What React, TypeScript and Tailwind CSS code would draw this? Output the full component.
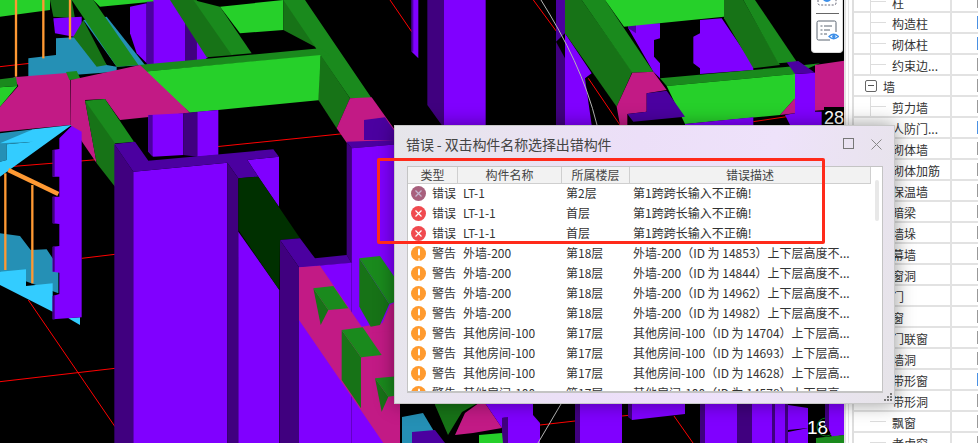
const PURPLE = "#8000ff";
const DARK = "#40007f";
const MID = "#4b00a0";
const BRIGHT = "#26d02a";
const GREEN = "#1a8a1d";
const DEEP = "#177317";
const MAGENTA = "#c21a85";
const CYAN = "#33ccff";
const TEAL = "#2590b5";
const ORANGE = "#ff9933";

// scene polygons, in 3x screenshot pixels, painted back to front
const backShapes: [string, string][] = [
  [BRIGHT, "0,0 150,0 150,30 0,50"],
  [DEEP, "150,0 215,0 225,55 160,50"],
  [PURPLE, "160,55 245,50 245,115 165,100"],
  [TEAL, "85,175 168,165 168,115 250,110 320,195 350,200 350,215 85,235"],
  [DEEP, "250,60 320,195 290,200 220,110"],
  [TEAL, "250,60 320,50 435,195 350,200"],
  [GREEN, "215,0 280,0 415,195 350,200"],
  [BRIGHT, "280,0 510,0 300,20"],
  [PURPLE, "390,20 440,10 440,190 410,160 390,100"],
  [MID, "440,5 460,5 460,200 440,200"],
  [PURPLE, "460,0 555,0 555,200 460,200"],
  [DARK, "555,60 590,110 590,200 555,200"],
  [PURPLE, "590,120 625,170 590,200"],
  [DEEP, "510,0 590,0 700,165 620,172"],
  [GREEN, "580,0 660,20 755,160 695,165"],
  [BRIGHT, "660,20 850,0 850,90 720,100"],
  [DEEP, "850,0 915,0 945,140 850,90"],
  [GREEN, "850,0 915,0 1115,295 1050,295 960,165 945,140"],
  [GREEN, "415,195 960,145 990,165 430,215"],
  [BRIGHT, "430,215 962,165 962,300 570,338"],
  [MAGENTA, "0,320 55,258 40,232 210,218 212,375 0,395"],
  [BRIGHT, "0,262 52,258 0,320"],
  [GREEN, "0,238 48,232 52,258 0,262"],
  [GREEN, "198,216 230,213 242,238 208,240"],
  [MAGENTA, "212,240 420,195 570,338 360,360 315,297 255,300 290,490 212,375"],
  [DEEP, "255,302 290,490 345,560 345,430 400,425 345,350"],
  [GREEN, "255,302 315,297 402,425 345,430"],
  [PURPLE, "445,345 550,340 550,465 460,470 445,455"],
  [MID, "445,345 458,345 458,470 445,455"],
  [DARK, "550,340 592,335 592,470 550,465"],
  [PURPLE, "592,335 655,330 655,465 592,470"],
  [DEEP, "962,165 1050,295 1010,385 955,300"],
  [MAGENTA, "1050,295 1115,292 1185,390 1185,424 1040,428 1010,385"],
  [MID, "1092,360 1155,352 1185,395 1185,420 1092,420"],
  [TEAL, "0,400 100,388 100,425 20,433 20,480 0,485"],
  [CYAN, "0,430 100,425 20,433 20,480 0,485 0,530 215,375 100,388"],
  [TEAL, "0,700 60,708 92,750 140,748 175,800 175,880 0,815"],
  [CYAN, "0,815 78,808 78,858 158,850 158,935 0,855"],
  [CYAN, "205,955 240,952 240,975"],
  [PURPLE, "215,378 178,415 178,447 158,450 158,530 178,530 178,590 158,590 158,670 178,672 178,738 158,740 158,815 178,818 178,882 158,888 158,958 245,952 245,395"],
  [DARK, "158,450 164,450 164,530 158,530"],
  [DARK, "158,590 164,590 164,670 158,670"],
  [DARK, "158,740 164,740 164,815 158,815"],
  [DARK, "158,888 164,888 164,958 158,958"],
];

const frontShapes: [string, string][] = [
  [DARK, "343,432 400,515 400,1329 343,1329"],
  [PURPLE, "400,515 682,488 682,1329 400,1329"],
  [PURPLE, "742,480 837,470 837,620 775,530"],
  [MID, "343,432 405,425 445,482 820,448 837,470 742,480 775,530 715,535 682,488 400,515"],
  [DARK, "682,488 715,535 715,1329 682,1329"],
  [PURPLE, "715,695 838,870 838,1329 715,1329"],
  ["#003000", "715,535 775,530 900,715 840,720 838,870 715,690"],
  [DARK, "1040,425 1055,445 1055,790 1040,765"],
  [MID, "1040,425 1185,420 1200,432 1055,445"],
  [PURPLE, "1055,445 1200,432 1200,1329 1055,1329"],
  [MID, "840,720 900,715 945,775 1040,765 1055,790 897,802"],
  [DARK, "840,720 897,802 897,1329 840,1329"],
  [PURPLE, "897,802 1055,788 1055,1329 897,1329"],
  [MAGENTA, "897,802 960,797 1085,980 1200,960 1200,1329 1150,1329 897,960"],
  [MAGENTA, "1110,980 1145,975 1170,915 1200,900 1200,990 1110,1000"],
  [DEEP, "940,865 985,930 962,975"],
  [GREEN, "940,865 1000,858 1045,925 985,930"],
  [DEEP, "1078,775 1168,912 1140,975 1112,980 1078,920"],
  [GREEN, "1078,775 1140,768 1200,855 1200,900 1168,912"],
  [DEEP, "1025,990 1083,1072 1083,1225 1025,1140"],
  [GREEN, "1025,990 1088,982 1145,1065 1083,1072"],
  [DEEP, "1125,1135 1165,1190 1145,1235"],
  [GREEN, "1125,1135 1200,1128 1200,1185 1165,1190"],
];

// top middle part, offset by 1200 in the 3x space
const topRight: [string, string][] = [
  [PURPLE, "35,0 55,0 55,175 35,155"],
  [MID, "35,0 40,0 40,155 35,155"],
  [DARK, "82,0 132,0 132,375 125,375 82,315"],
  [PURPLE, "132,0 257,0 257,375 132,375"],
  [MID, "468,0 495,0 495,100 468,125"],
  [DARK, "468,125 495,175 495,375 468,375"],
  [PURPLE, "495,100 575,220 555,235 575,375 495,375"],
  [PURPLE, "685,70 780,70 780,115 762,120 762,170 780,190 780,235 760,215 685,85"],
  [MID, "685,70 708,70 708,100 685,85"],
  [PURPLE, "880,110 900,100 900,60 965,55 1060,195 1060,210 900,222 900,205 880,190"],
  [DEEP, "495,0 545,0 697,215 650,320 495,100"],
  [GREEN, "545,0 615,0 760,215 697,218"],
  [BRIGHT, "615,0 972,0 972,50 672,80"],
  [DEEP, "972,0 1030,0 1140,195 1060,205 972,55"],
  [GREEN, "1030,0 1065,0 1190,185 1135,190"],
  [GREEN, "780,235 1165,200 1260,190 1185,222 800,258"],
  [BRIGHT, "800,258 1185,222 1185,295 1140,345 855,372"],
  [MAGENTA, "697,218 760,215 800,270 740,280 740,335 682,342 682,375 660,375 650,320"],
  [MID, "740,280 800,272 855,350 700,365 682,342 740,335"],
  [MAGENTA, "1140,345 1185,295 1185,340"],
  [MAGENTA, "1245,195 1332,182 1332,325 1245,332"],
  [PURPLE, "1185,222 1245,218 1245,375 1185,375"],
  [MID, "1160,187 1195,183 1245,218 1185,222"],
  [PURPLE, "855,372 1060,352 1060,375 855,375"],
  [PURPLE, "1155,345 1185,340 1185,375 1170,375"],
  [PURPLE, "1245,335 1265,335 1265,375 1245,375"],
];

// strip under the dialog, real screenshot pixels
const bottomLeft: [string, string][] = [
  [MAGENTA, "394,400 400,400 400,443 394,443"],
  [TEAL, "402,417 423,413 435,433 435,443 402,443"],
  [MID, "412,432 435,430 445,443 412,443"],
  [DEEP, "435,400 483,400 462,412 448,435 435,405"],
  [MAGENTA, "483,400 502,428 473,433 455,435 465,413"],
  [PURPLE, "483,400 508,400 508,417 502,418 502,428"],
  [PURPLE, "502,418 508,417 508,400 533,400 533,415 540,423 540,443 502,443"],
  [DARK, "502,418 508,417 508,443 502,443"],
  [BRIGHT, "479,435 502,433 503,443 479,443"],
  [DARK, "575,400 580,400 580,443 575,443"],
  [PURPLE, "580,400 622,400 622,443 580,443"],
  [DARK, "628,400 632,400 632,420 628,417"],
  [PURPLE, "632,400 685,400 685,414 632,420"],
  [DARK, "700,400 705,400 705,443 700,443"],
  [PURPLE, "705,400 737,400 737,443 705,443"],
  [DARK, "737,400 752,400 752,443 737,443"],
  [PURPLE, "752,400 772,400 772,443 752,443"],
  [DARK, "772,400 775,400 775,443 772,443"],
  [PURPLE, "775,400 785,400 785,443 775,443"],
  [DARK, "785,400 788,400 788,443 785,443"],
  [PURPLE, "788,405 808,408 808,428 788,430"],
  [PURPLE, "788,432 808,428 808,443 788,443"],
];

const redLines3x = [
  "0,200 90,190",
  "0,1145 345,1105",
  "85,900 345,1280",
  "245,775 345,763",
  "650,440 1040,400",
  "30,500 340,475",
  "1170,0 1235,95",
  "1600,0 1670,95",
  "1765,235 1860,375",
  "2260,365 2360,350",
];

const errorRow = (first: boolean, name: string, floor: string) => ({
  kind: first ? ("muted" as const) : ("error" as const),
  label: "错误",
  name,
  floor,
  desc: "第1跨跨长输入不正确!",
});

const warnRow = (name: string, floor: string, desc: string) => ({
  kind: "warn" as const,
  label: "警告",
  name,
  floor,
  desc,
});

const rows = [
  errorRow(true, "LT-1", "第2层"),
  errorRow(false, "LT-1-1", "首层"),
  errorRow(false, "LT-1-1", "首层"),
  warnRow("外墙-200", "第18层", "外墙-200（ID 为 14853）上下层高度不..."),
  warnRow("外墙-200", "第18层", "外墙-200（ID 为 14844）上下层高度不..."),
  warnRow("外墙-200", "第18层", "外墙-200（ID 为 14962）上下层高度不..."),
  warnRow("外墙-200", "第18层", "外墙-200（ID 为 14982）上下层高度不..."),
  warnRow("其他房间-100", "第17层", "其他房间-100（ID 为 14704）上下层高..."),
  warnRow("其他房间-100", "第17层", "其他房间-100（ID 为 14693）上下层高..."),
  warnRow("其他房间-100", "第17层", "其他房间-100（ID 为 14628）上下层高..."),
  warnRow("其他房间-100", "第17层", "其他房间-100（ID 为 14578）上下层高..."),
];

const tree: { name: string; group?: boolean; line?: boolean; blue?: boolean }[] = [
  { name: "柱", line: true },
  { name: "构造柱", line: true, blue: true },
  { name: "砌体柱", line: true, blue: true },
  { name: "约束边...", line: true },
  { name: "墙", group: true },
  { name: "剪力墙", line: true },
  { name: "人防门...", blue: true },
  { name: "砌体墙" },
  { name: "砌体加筋" },
  { name: "保温墙" },
  { name: "暗梁" },
  { name: "墙垛" },
  { name: "幕墙" },
  { name: "窗洞" },
  { name: "门" },
  { name: "窗" },
  { name: "门联窗" },
  { name: "墙洞" },
  { name: "带形窗", blue: true },
  { name: "带形洞" },
  { name: "飘窗" },
  { name: "老虎窗" },
];

function Shapes({ items }: { items: [string, string][] }) {
  return (
    <>
      {items.map(([fill, points], i) => (
        <polygon key={i} fill={fill} points={points} />
      ))}
    </>
  );
}

function Scene() {
  return (
    <svg viewBox="0 0 2532 1329" className="h-full w-full" aria-hidden>
      <rect width="2532" height="1329" fill="#000" />
      {redLines3x.map((p) => (
        <polyline key={p} points={p} fill="none" stroke="#f00" strokeWidth="3" />
      ))}
      <Shapes items={backShapes} />
      {[48, 130, 210].map((x, i) => (
        <line key={x} x1={x} y1="0" x2={x} y2={[230, 175, 118][i]} stroke={ORANGE} strokeWidth="7" />
      ))}
      <line x1="25" y1="510" x2="175" y2="582" stroke={ORANGE} strokeWidth="14" />
      <line x1="16" y1="520" x2="16" y2="810" stroke={ORANGE} strokeWidth="7" />
      <line x1="97" y1="555" x2="97" y2="850" stroke={ORANGE} strokeWidth="7" />
      <Shapes items={frontShapes} />
      <g transform="translate(1200 0)">
        <Shapes items={topRight} />
      </g>
      <g transform="scale(3)">
        <polyline points="540,425 575,421" fill="none" stroke="#f00" strokeWidth="1" />
        <polyline points="622,416 632,415" fill="none" stroke="#f00" strokeWidth="1" />
        <polyline points="674,416 693,443" fill="none" stroke="#f00" strokeWidth="1" />
        <Shapes items={bottomLeft} />
        <path d="M541 0 C566 40 586 80 597 125" fill="none" stroke="#b5b5b5" strokeWidth="1" />
        <path d="M561 404 L538 443" fill="none" stroke="#b5b5b5" strokeWidth="1" />
        <circle cx="826" cy="427" r="9" fill="none" stroke="#0a7a1a" strokeWidth="1" />
        <text x="807" y="434" fill="#fff" fontSize="19" fontFamily="Liberation Sans, sans-serif">
          18
        </text>
        <polygon fill={DARK} points="825,400 829,400 829,430 825,425" />
        <polygon fill={PURPLE} points="829,400 844,400 844,435 832,437 829,430" />
        <polygon fill={GREEN} points="816,438 844,435 844,443 816,443" />
        <rect x="824" y="107" width="20" height="18" fill="#000" />
        <text x="824" y="124" fill="#fff" fontSize="18" fontFamily="Liberation Sans, sans-serif">
          28
        </text>
      </g>
    </svg>
  );
}

function SideToolbar() {
  return (
    <div className="absolute right-px top-0 flex h-[53px] w-[32px] flex-col items-center rounded-b-sm border border-t-0 border-[#d8d8d8] bg-white">
      <svg width="22" height="6" viewBox="0 0 22 6" className="shrink-0" aria-hidden>
        <path d="M2 0v3q0 2 2 2h14q2 0 2-2V0" fill="none" stroke="#667" strokeWidth="1" strokeDasharray="2 1.5" />
        <path d="M7 0q4 4 8 0" fill="#3d8fe8" />
      </svg>
      <div className="mt-[7px] h-px w-[23px] shrink-0 bg-[#666]" />
      <svg width="23" height="21" viewBox="0 0 23 21" className="mt-[6px] shrink-0" aria-hidden>
        <path d="M14 20H2.500Q1 20 1 18.500V2.500Q1 1 2.500 1H18.500Q20 1 20 2.500V12" fill="none" stroke="#5a6470" strokeWidth="1" />
        <path d="M4.500 6h2M8 6h8M4.500 10h2M8 10h6M4.500 14h2M8 14h3" stroke="#5a6470" strokeWidth="1" />
        <path d="M13 16.500q4.500-4.500 9.500 0q-5 4.500-9.500 0Z" fill="#fff" stroke="#3d8fe8" strokeWidth="1.300" />
        <circle cx="17.800" cy="16.500" r="1.700" fill="#3d8fe8" />
      </svg>
    </div>
  );
}

function TreePanel() {
  return (
    <div className="flex h-[443px] w-[134px] shrink-0 border-l-2 border-[#e4e4e4] bg-white pl-[2px]">
      <div className="w-full overflow-hidden border-l border-[#e4e4e4] pl-[3px]">
        <div className="-mt-[8px] border-l-2 border-[#dedede]">
          {tree.map((item) => (
            <div key={item.name} className="flex h-[21px] items-stretch border-b-2 border-[#e2e2e2] text-[12px] leading-[19px] text-[#333]">
              <div className="flex w-[98px] shrink-0 items-center border-r-2 border-[#e2e2e2]">
                {item.group ? (
                  <>
                    <span className="ml-[11px] flex h-[12px] w-[12px] items-center justify-center rounded-[2px] border border-[#666]">
                      <span className="h-px w-[6px] bg-[#555]" />
                    </span>
                    <span className="ml-[6px] pt-[2px]">{item.name}</span>
                  </>
                ) : (
                  <>
                    <span className={`ml-[16px] h-full w-[16px] ${item.line ? "border-l border-[#ddd]" : ""}`}>
                      <span className="block h-1/2 border-b border-[#ddd]" />
                    </span>
                    <span className="ml-[6px] whitespace-nowrap pt-[2px]">{item.name}</span>
                  </>
                )}
              </div>
              <div className="flex-1" />
              <div className={`my-[3px] w-px ${item.blue ? "bg-[#4a90e2]" : "bg-[#999]"}`} />
            </div>
          ))}
        </div>
      </div>
    </div>
  );
}

function StatusIcon({ kind }: { kind: "muted" | "error" | "warn" }) {
  if (kind === "warn") {
    return (
      <span className="flex h-[15px] w-[15px] shrink-0 items-center justify-center rounded-full bg-[#ff9a2e]">
        <span className="h-[7px] w-[2px] -translate-y-[1.5px] rounded-sm bg-white shadow-[0_9px_0_-0.5px_#fff]" />
      </span>
    );
  }
  const muted = kind === "muted";
  return (
    <span className={`flex h-[15px] w-[15px] shrink-0 items-center justify-center rounded-full ${muted ? "bg-[#a8607d]" : "bg-[#f04a4f]"}`}>
      <svg width="9" height="9" viewBox="0 0 9 9" aria-hidden>
        <path d="M1.500 1.500l6 6M7.500 1.500l-6 6" stroke={muted ? "#c4b6d0" : "#fff"} strokeWidth="1.200" />
      </svg>
    </span>
  );
}

function ErrorDialog() {
  return (
    <div className="absolute left-[394px] top-[125px] flex h-[279px] w-[501px] flex-col border border-[#c8c8c8] bg-[linear-gradient(100deg,#e6e6ea_0%,#ecdff8_45%,#eee2fa_70%,#e6e4e8_100%)] shadow-[0_0_18px_rgba(0,0,0,0.4)]">
      <div className="flex h-[39px] shrink-0 items-center pb-[2px] pl-[11px] pr-[12px]">
        <span className="text-[14px] tracking-[-0.1px] text-[#444]">错误 - 双击构件名称选择出错构件</span>
        <span className="ml-auto h-[11px] w-[11px] -translate-y-px border border-[#777]" />
        <svg width="11" height="11" viewBox="0 0 11 11" className="ml-[17px]" aria-hidden>
          <path d="M.500.500l10 10M10.500.500l-10 10" stroke="#888" strokeWidth="1" />
        </svg>
      </div>
      <div className="ml-[12px] mr-[11px] mt-px flex h-[227px] flex-col overflow-hidden border border-b-2 border-[#c4c4c4] bg-white">
        <div className="grid h-[17px] w-[463px] shrink-0 grid-cols-[50px_104px_68px_241px] border-b border-[#cfcfcf] bg-[#f2f2f2] text-center text-[12px] leading-[16px] text-[#444]">
          <div className="border-r border-[#cfcfcf]">类型</div>
          <div className="border-r border-[#cfcfcf]">构件名称</div>
          <div className="border-r border-[#cfcfcf]">所属楼层</div>
          <div className="border-r border-[#cfcfcf]">错误描述</div>
        </div>
        <div className="flex min-h-0 flex-1">
          <div className="-mt-px w-[463px] shrink-0 overflow-hidden">
            {rows.map((row, i) => (
              <div key={i} className="grid h-[20px] grid-cols-[50px_104px_68px_241px] items-center whitespace-nowrap text-[12px] text-[#333]">
                <div className="flex items-center pl-[3px]">
                  <StatusIcon kind={row.kind} />
                  <span className="ml-[6px]">{row.label}</span>
                </div>
                <div className="pl-[5px]">{row.name}</div>
                <div className="pl-[4px]">{row.floor}</div>
                <div className="overflow-hidden pl-[3px]">{row.desc}</div>
              </div>
            ))}
          </div>
          <div className="ml-[4px] mt-[-4px]">
            <div className="h-[41px] w-[4px] rounded-sm bg-[#e8e8e8]" />
          </div>
        </div>
      </div>
      <svg width="8" height="8" viewBox="0 0 8 8" className="absolute bottom-[2px] right-[2px]" aria-hidden>
        <path d="M6 0h2v2H6zM3 3h2v2H3zM6 3h2v2H6zM0 6h2v2H0zM3 6h2v2H3zM6 6h2v2H6z" fill="#777" />
      </svg>
    </div>
  );
}

export default function App() {
  return (
    <div className="relative flex h-[443px] w-[978px] overflow-hidden bg-white font-['Noto_Sans_CJK_SC','Liberation_Sans',sans-serif]">
      <div className="relative h-[443px] w-[844px] shrink-0">
        <Scene />
        <SideToolbar />
      </div>
      <TreePanel />
      <ErrorDialog />
      <div className="absolute left-[377px] top-[158px] h-[86px] w-[448px] rounded-[2px] border-[3px] border-[#ff2a1a]" />
    </div>
  );
}
